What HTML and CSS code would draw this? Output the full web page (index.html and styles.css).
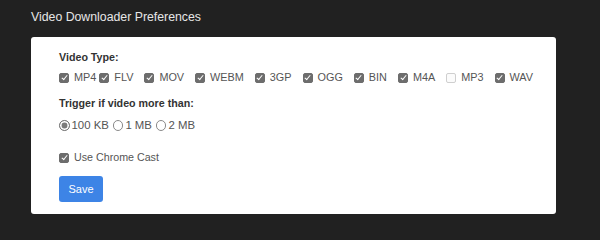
FILE: index.html
```html
<!DOCTYPE html>
<html>
<head>
<meta charset="utf-8">
<link rel="stylesheet" href="styles.css">
</head>
<body>
<div class="page">
  <div class="title">Video Downloader Preferences</div>
  <div class="card">
    <div class="heading">Video Type:</div>
    <div class="row">
      <label class="opt tight"><input type="checkbox" checked>MP4</label>
      <label class="opt"><input type="checkbox" checked>FLV</label>
      <label class="opt"><input type="checkbox" checked>MOV</label>
      <label class="opt"><input type="checkbox" checked>WEBM</label>
      <label class="opt"><input type="checkbox" checked>3GP</label>
      <label class="opt"><input type="checkbox" checked>OGG</label>
      <label class="opt"><input type="checkbox" checked>BIN</label>
      <label class="opt"><input type="checkbox" checked>M4A</label>
      <label class="opt"><input type="checkbox">MP3</label>
      <label class="opt"><input type="checkbox" checked>WAV</label>
    </div>
    <div class="heading trigger">Trigger if video more than:</div>
    <div class="row radios">
      <label class="ropt"><input type="radio" name="size" checked>100 KB</label>
      <label class="ropt"><input type="radio" name="size">1 MB</label>
      <label class="ropt"><input type="radio" name="size">2 MB</label>
    </div>
    <div class="row cast">
      <label class="opt"><input type="checkbox" checked>Use Chrome Cast</label>
    </div>
    <button class="save">Save</button>
  </div>
</div>
</body>
</html>
```

FILE: styles.css
```css
html, body {
  margin: 0;
  padding: 0;
  background: #212121;
}
body {
  font-family: "Liberation Sans", Arial, sans-serif;
}
.page {
  padding: 9px 0 0 31px;
}
.title {
  font-size: 12.3px;
  line-height: 16px;
  color: #e6e6e6;
}
.card {
  margin-top: 12px;
  width: 525px;
  box-sizing: border-box;
  background: #ffffff;
  border-radius: 3px;
  padding: 14px 28px 12px;
  display: flex;
  flex-direction: column;
  align-items: flex-start;
}
.heading {
  font-size: 10.7px;
  line-height: 13px;
  font-weight: bold;
  color: #333333;
}
.trigger {
  margin-top: 13px;
}
.row {
  display: flex;
  align-items: center;
  height: 13px;
  margin-top: 7px;
  font-size: 10.85px;
  color: #555555;
}
.radios {
  margin-top: 9px;
  font-size: 11.4px;
}
.cast {
  margin-top: 19px;
  font-size: 10.7px;
}
.opt, .ropt {
  display: flex;
  align-items: center;
  line-height: 13px;
  white-space: nowrap;
}
.opt {
  margin-right: 11px;
}
.opt.tight {
  margin-right: 3px;
}
.ropt {
  margin-right: 4px;
}
.opt input {
  appearance: none;
  -webkit-appearance: none;
  width: 10px;
  height: 10px;
  margin: 0 5px 0 0;
  box-sizing: border-box;
  border: 1px solid #cfcfcf;
  border-radius: 2px;
  background: #fbfbfb;
  position: relative;
}
.opt input:checked {
  background: #6d6d6d;
  border-color: #6d6d6d;
}
.opt input:checked::after {
  content: "";
  position: absolute;
  left: 2.6px;
  top: 0.3px;
  width: 2.4px;
  height: 5px;
  border: solid #ffffff;
  border-width: 0 1.5px 1.5px 0;
  transform: rotate(40deg);
}
.ropt input {
  appearance: none;
  -webkit-appearance: none;
  width: 10.5px;
  height: 10.5px;
  margin: 0 2px 0 0;
  box-sizing: border-box;
  border: 1px solid #8a8a8a;
  border-radius: 50%;
  background: #ffffff;
}
.ropt input:checked {
  border-color: #7a7a7a;
  background: #7a7a7a;
  box-shadow: inset 0 0 0 1.6px #ffffff;
}
.save {
  margin-top: 12px;
  width: 44px;
  height: 26px;
  padding: 0;
  border: none;
  border-radius: 3px;
  background: #3d84e6;
  color: #ffffff;
  font-family: "Liberation Sans", Arial, sans-serif;
  font-size: 11px;
}
```
